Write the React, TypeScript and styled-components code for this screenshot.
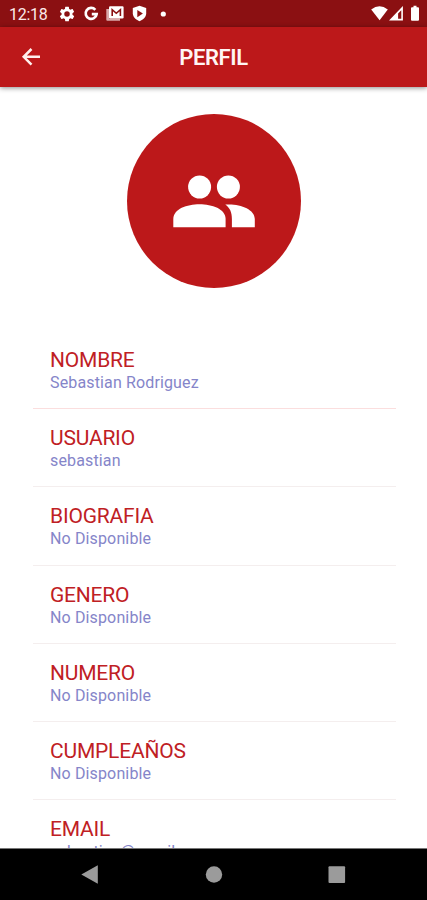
import React from 'react';
import styled, { createGlobalStyle } from 'styled-components';

const GlobalStyle = createGlobalStyle`
  * { box-sizing: border-box; }
  body { margin: 0; background: #fff; overflow: hidden; }
`;

const Screen = styled.div`
  width: 427px;
  height: 900px;
  display: flex;
  flex-direction: column;
  overflow: hidden;
  background: #fff;
  font-family: Roboto, 'Liberation Sans', sans-serif;
`;

const StatusBar = styled.div`
  flex: none;
  height: 27px;
  display: flex;
  align-items: center;
  padding: 0 6px 0 9px;
  background: #8b1012;
  color: #fbe9e9;
`;

const Clock = styled.span`
  width: 49px;
  font-size: 16px;
  line-height: 27px;
  letter-spacing: -0.3px;
  padding-top: 1px;
`;

const StatusIcons = styled.svg`
  display: block;
  flex: none;
`;

const Spacer = styled.div`
  flex: 1;
`;

const Header = styled.header`
  flex: none;
  height: 60px;
  display: grid;
  grid-template-columns: 62px 1fr 62px;
  align-items: center;
  background: #bc181a;
  box-shadow: 0 1px 5px rgba(0, 0, 0, 0.45);
  z-index: 1;
`;

const BackButton = styled.button`
  display: flex;
  justify-content: center;
  padding: 0;
  border: 0;
  background: none;
`;

const Title = styled.h1`
  margin: 2px 0 0;
  text-align: center;
  font-size: 22px;
  line-height: 26px;
  font-weight: 600;
  letter-spacing: -0.35px;
  color: #fff5f4;
`;

const Content = styled.main`
  flex: 1;
  min-height: 0;
  overflow: hidden;
`;

const Avatar = styled.div`
  width: 174px;
  height: 174px;
  margin: 27px auto 0 127px;
  border-radius: 50%;
  background: #bc181a;
`;

const FieldList = styled.div`
  margin: 43px 31px 0 33px;
`;

const Field = styled.div`
  height: 78.2px;
  padding: 16px 0 0 17px;
  border-bottom: 1px solid #f4eeee;
  &:first-child { border-bottom-color: #fbdede; }
`;

const Label = styled.div`
  font-size: 21px;
  line-height: 26px;
  letter-spacing: -0.2px;
  color: #bf2024;
`;

const Value = styled.div`
  font-size: 16px;
  line-height: 20px;
  letter-spacing: 0.14px;
  color: #8585c9;
`;

const NavBar = styled.nav`
  flex: none;
  height: 52px;
  border-top: 1px solid #777;
  background: #000;
  display: flex;
  z-index: 1;
`;

const fields = [
  { label: 'NOMBRE', value: 'Sebastian Rodriguez' },
  { label: 'USUARIO', value: 'sebastian' },
  { label: 'BIOGRAFIA', value: 'No Disponible' },
  { label: 'GENERO', value: 'No Disponible' },
  { label: 'NUMERO', value: 'No Disponible' },
  { label: 'CUMPLEAÑOS', value: 'No Disponible' },
  { label: 'EMAIL', value: 'sebastian@gmail.com' },
];

const Notifications = () => (
  <StatusIcons width="110" height="27" viewBox="58 0 110 27" fill="#fff">
    <g transform="translate(57.9 4.9) scale(.76)">
      <path d="M19.14 12.94c.04-.3.06-.61.06-.94s-.02-.64-.07-.94l2.03-1.58a.5.5 0 0 0 .12-.61l-1.92-3.32a.5.5 0 0 0-.59-.22l-2.39.96a7 7 0 0 0-1.62-.94L14.4 2.8a.5.5 0 0 0-.48-.4h-3.84a.5.5 0 0 0-.47.4l-.36 2.55c-.59.24-1.13.57-1.62.94l-2.39-.96a.5.5 0 0 0-.59.22L2.74 8.87a.5.5 0 0 0 .12.61l2.03 1.58a6 6 0 0 0 0 1.88l-2.03 1.58a.5.5 0 0 0-.12.61l1.92 3.32c.12.22.37.29.59.22l2.39-.96c.5.38 1.03.7 1.62.94l.36 2.54c.05.24.24.41.48.41h3.84c.24 0 .44-.17.47-.41l.36-2.54a7 7 0 0 0 1.62-.94l2.39.96c.22.08.47 0 .59-.22l1.92-3.32a.5.5 0 0 0-.12-.61zM12 15.6a3.6 3.6 0 1 1 0-7.2 3.6 3.6 0 0 1 0 7.2z" />
    </g>
    <path d="M95.3 9.8A5.5 5.5 0 1 0 96.6 14.2H91.8" fill="none" stroke="#fff" strokeWidth="2.7" />
    <path d="M106.3 9v10.8q0 1 1 1H120V18.5H109V9z" fill="#d9a9aa" />
    <rect x="109" y="6.2" width="14.6" height="12.3" rx="1.2" />
    <path d="M112.2 16V9.7l4.1 3.6 4.1-3.6V16" fill="none" stroke="#8b1012" strokeWidth="1.6" />
    <path d="M139.5 5.7l6.7 2.4v5.2c0 3.7-2.8 6.4-6.7 8-3.9-1.6-6.7-4.3-6.7-8V8.1z" />
    <path d="M137.3 10v7.2l5.6-3.6z" fill="#8b1012" />
    <circle cx="163.3" cy="14" r="2.6" />
  </StatusIcons>
);

const Signals = () => (
  <StatusIcons width="53" height="27" viewBox="368 0 53 27" fill="#fff">
    <path d="M371.2 9.6q8.3-6.5 16.6 0L379.6 20.3z" />
    <path d="M402.9 6v14.6H389zM401.3 10.2l-3.2 3.3v5.3h3.2z" fillRule="evenodd" />
    <path d="M412 7.3h1.5V5.8h3v1.5h1.5q1 0 1 1V19.7q0 1-1 1h-6q-1 0-1-1V8.3q0-1 1-1z" />
  </StatusIcons>
);

export default function App() {
  return (
    <Screen>
      <GlobalStyle />
      <StatusBar>
        <Clock>12:18</Clock>
        <Notifications />
        <Spacer />
        <Signals />
      </StatusBar>
      <Header>
        <BackButton aria-label="Volver">
          <svg width="20" height="20" viewBox="0 0 20 20" fill="none" stroke="#fff0ee" strokeWidth="2.5">
            <path d="M19 9.8H3.2M10.5 2L2.7 9.8l7.8 7.8" />
          </svg>
        </BackButton>
        <Title>PERFIL</Title>
      </Header>
      <Content>
        <Avatar>
          <svg width="174" height="174" viewBox="127 114 174 174" fill="#fff">
            <circle cx="199.6" cy="187" r="11.5" />
            <circle cx="228.4" cy="187" r="11.5" />
            <path d="M173.3 227.3V219C173.3 209 187 204.3 199.5 204.3S225.6 209 225.6 219V227.3z" />
            <path d="M225.3 204.6C239 203.4 254.8 208.8 254.8 219V227.3H231.9V219C231.9 212.2 229.8 207.8 225.3 204.6z" />
          </svg>
        </Avatar>
        <FieldList>
          {fields.map((f) => (
            <Field key={f.label}>
              <Label>{f.label}</Label>
              <Value>{f.value}</Value>
            </Field>
          ))}
        </FieldList>
      </Content>
      <NavBar>
        <svg width="427" height="51" viewBox="0 849 427 51" fill="#9b9b9b">
          <path d="M81.3 874.5L97.8 865.3V883.8z" />
          <circle cx="214" cy="874.5" r="8.2" />
          <rect x="328.5" y="866.3" width="16.6" height="16.6" rx="1" />
        </svg>
      </NavBar>
    </Screen>
  );
}
